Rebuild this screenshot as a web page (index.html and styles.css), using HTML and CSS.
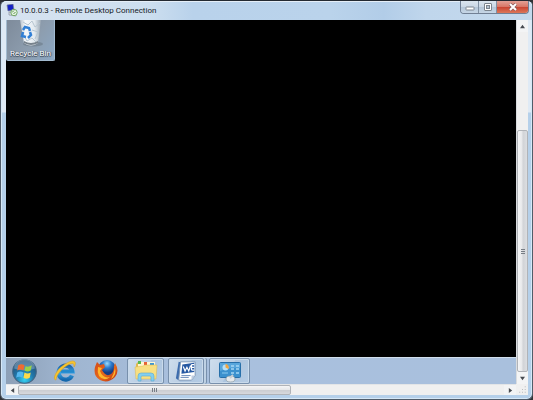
FILE: index.html
```html
<!DOCTYPE html>
<html lang="en">
<head>
<meta charset="utf-8">
<title>10.0.0.3 - Remote Desktop Connection</title>
<link rel="stylesheet" href="styles.css">
</head>
<body>
<main class="window">
  <header class="titlebar">
    <svg class="app-icon" viewBox="0 0 12 13" aria-hidden="true">
      <path d="M1 1l6-1 1 6-6 1z" fill="#1421c4" stroke="#777e94" stroke-width=".7"/>
      <path d="M3 8l7 1v3l-7-1z" fill="#d8dde5" stroke="#7d8795" stroke-width=".6"/>
      <circle cx="8" cy="8.500" r="3.200" fill="#e9f5e6" stroke="#72a863"/>
      <path d="M6 8.500l2-2M7.500 10l2-2" stroke="#579348" stroke-width="1"/>
    </svg>
    <h1 class="title">10.0.0.3 - Remote Desktop Connection</h1>
    <div class="controls">
      <button class="control" aria-label="Minimize"><svg viewBox="0 0 10 8"><rect x="1" y="4" width="8" height="3" rx=".5" fill="#fff" stroke="#7c858f"/></svg></button>
      <button class="control" aria-label="Maximize"><svg viewBox="0 0 10 8"><rect x="1.500" y=".5" width="7" height="7" rx=".5" fill="#fff" stroke="#7c858f"/><rect x="3.500" y="2.500" width="3" height="3" fill="#b3c2d1" stroke="#7c858f"/></svg></button>
      <button class="control close" aria-label="Close"><svg viewBox="0 0 10 8"><path d="M2 1l6 6M8 1L2 7" stroke="#8a5a5a" stroke-width="3.400"/><path d="M2 1l6 6M8 1L2 7" stroke="#fff" stroke-width="2"/></svg></button>
    </div>
  </header>
  <div class="viewport">
    <section class="remote">
      <div class="desktop">
        <div class="shortcut">
          <svg class="bin" viewBox="0 0 26 28" aria-hidden="true">
            <defs><linearGradient id="glass"><stop stop-color="#b7c1cb"/><stop offset=".25" stop-color="#f5f8fb"/><stop offset=".7" stop-color="#e2e9ef"/><stop offset="1" stop-color="#9aa7b3"/></linearGradient></defs>
            <ellipse cx="15" cy="24" rx="10" ry="2.500" fill="#64717e" opacity=".5"/>
            <path d="M2 0h21l-3 23q-7 5-14 0z" fill="url(#glass)"/>
            <path d="M5 2l5 3 4-4 3 6 5-4M14 10l6 2-3 7M5 14l4 7 5-3 4 4" fill="none" stroke="#b7c5d0"/>
            <path d="M6 21q7 4 14 0v2q-7 4-14 0z" fill="#77828c"/>
            <path d="M5 10l2-3 4 1 1 3M12 12l1 3-3 3M8 17l-4-1 1-4" fill="none" stroke="#317fd5" stroke-width="2.500"/>
          </svg>
          <span class="shortcut-name">Recycle Bin</span>
        </div>
      </div>
      <nav class="taskbar" aria-label="Taskbar">
        <button class="task start" aria-label="Start">
          <svg viewBox="0 0 24 24"><defs><radialGradient id="orb" cx=".5" cy=".85" r=".85"><stop stop-color="#36d2f3"/><stop offset=".45" stop-color="#2077aa"/><stop offset="1" stop-color="#29496c"/></radialGradient></defs><circle cx="12" cy="12" r="11.300" fill="url(#orb)" stroke="#426482"/><path d="M2 9a10 9 0 0 1 20 0q-10 4-20 0" fill="#a9c9dd" opacity=".4"/><path d="M6 6q3-2 6 0l-1 5q-3-2-6 0z" fill="#f06b30"/><path d="M13 7q3 1 6-1l-1 5q-3 2-6 0z" fill="#9bd246"/><path d="M5 13q3-2 6 0l-1 5q-3-2-6 0z" fill="#54b7ef"/><path d="M12 13q3 2 6 0l-1 5q-3 2-6 0z" fill="#ffda49"/></svg>
        </button>
        <button class="task" aria-label="Internet Explorer">
          <svg viewBox="0 0 24 24"><defs><linearGradient id="ie" x2="0" y2="1"><stop stop-color="#1d64ab"/><stop offset=".5" stop-color="#37a4e6"/><stop offset="1" stop-color="#1568ad"/></linearGradient></defs><path d="M19 16.500A7 7 0 1 1 19.500 12.500H7" fill="none" stroke="url(#ie)" stroke-width="4.200"/><path d="M8 12.500h13" stroke="#2389cc" stroke-width="2.500"/><path d="M3 21C-1 21 3 12 8 8s12-8 14-5c1 1 0 4-1 5 0-4-1-4-4-3C10 8 3 16 3 21z" fill="#f7c42e" stroke="#d29b24" stroke-width=".5"/></svg>
        </button>
        <button class="task" aria-label="Firefox">
          <svg viewBox="0 0 24 24"><defs><radialGradient id="globe" cx=".5" cy=".2"><stop stop-color="#9bdbfa"/><stop offset=".5" stop-color="#2b7acc"/><stop offset="1" stop-color="#193c83"/></radialGradient><linearGradient id="fox" x2="1" y2="1"><stop stop-color="#d54b16"/><stop offset=".55" stop-color="#e5681c"/><stop offset="1" stop-color="#b92c13"/></linearGradient></defs><circle cx="13" cy="10" r="9" fill="url(#globe)"/><path d="M3 3l3 3 4-1 1 3-3 3q3 6 7 5 5-1 5-9l1-3q5 8 0 14-7 7-15 3-7-4-5-13z" fill="url(#fox)"/><path d="M4 8l4 1-2 3q3 8 10 6-6 5-11-1-2-4-1-9zM21 9q2 7-4 11 3-5 4-11z" fill="#ffb62c"/></svg>
        </button>
        <button class="task running explorer" aria-label="Windows Explorer">
          <svg viewBox="0 0 24 24"><path d="M2 5l2-2h6l2 2h9v13H2z" fill="#e1b84e"/><path d="M4 3h17v8H4z" fill="#fff6d0"/><path d="M4 2h3v3H4z" fill="#57b94f"/><path d="M10 3h3v3h-3z" fill="#e76136"/><path d="M16 4h4v2h-4z" fill="#3c96d5"/><path d="M1 8l8-1 2-1h12l-1 14H2z" fill="#f7df82" stroke="#dab650" stroke-width=".5"/><path d="M4 22v-5q0-3 3-3h10q3 0 3 3v5h-3v-4q0-1-1-1H8q-1 0-1 1v4z" fill="#83cfef" stroke="#5ca9cf" stroke-width=".6"/></svg>
        </button>
        <button class="task running grouped word" aria-label="Microsoft Word">
          <svg viewBox="0 0 24 24"><path d="M4 2L1 20q1 2 4 2l3-19z" fill="#3c6cae"/><path d="M6 2h16v15l-4 5H4z" fill="#fff" stroke="#7893b4"/><path d="M8 5l13-2v10L7 15z" fill="#2658a2"/><path d="M9 7l2 5 2-4 2 4 2-6M18 5v6M18 5h3M18 8h3M18 11h3" stroke="#fff" stroke-width="1.300" fill="none"/><path d="M7 17h10M6 19h9" stroke="#5e82b7" stroke-width="1"/><path d="M18 22v-5h4z" fill="#bdcce0"/></svg>
        </button>
        <button class="task running panel" aria-label="Control Panel">
          <svg viewBox="0 0 24 24"><rect x="1.500" y="3.500" width="21" height="15" rx="1" fill="#3c91ce" stroke="#276fa9"/><path d="M2 4h20v5q-10-1-20 3z" fill="#73bcea" opacity=".5"/><circle cx="7.500" cy="8.500" r="3" fill="#b6e0f6"/><path d="M7.500 8.500V5a3.500 3.500 0 0 1 3 5z" fill="#f5a43b"/><path d="M13 7h3M18 7h3M13 10h3M18 10h3M13 14h3M18 14h3" stroke="#a5d6f3" stroke-width="1.300"/><path d="M4 14h6" stroke="#8acbf0"/><ellipse cx="12.500" cy="20" rx="4.500" ry="3" fill="#e5e9ec" stroke="#8a989f" stroke-width=".7"/><path d="M12 19l3-3" stroke="#c8ced2" stroke-width="2"/></svg>
        </button>
      </nav>
    </section>
    <div class="scroll vertical">
      <button class="arrow" aria-label="Scroll up"><svg viewBox="0 0 6 6"><path d="M0 5l3-4 3 4z"/></svg></button>
      <div class="track"><div class="space"></div><div class="thumb"><i></i><i></i><i></i></div></div>
      <button class="arrow" aria-label="Scroll down"><svg viewBox="0 0 6 6"><path d="M0 1l3 4 3-4z"/></svg></button>
    </div>
    <div class="scroll horizontal">
      <button class="arrow" aria-label="Scroll left"><svg viewBox="0 0 6 6"><path d="M5 0L1 3l4 3z"/></svg></button>
      <div class="track"><div class="thumb"><i></i><i></i><i></i></div><div class="space"></div></div>
      <button class="arrow" aria-label="Scroll right"><svg viewBox="0 0 6 6"><path d="M1 0l4 3-4 3z"/></svg></button>
    </div>
    <svg class="grip" viewBox="0 0 12 12" aria-hidden="true"><path d="M9 3h1M6 6h1M9 6h1M3 9h1M6 9h1M9 9h1" stroke="#aeb1b5" stroke-width="1"/></svg>
  </div>
</main>
</body>
</html>
```
FILE: styles.css
```css
* { box-sizing: border-box; }
html { background: #303236; }
body { margin: 0; font-family: Roboto, "Liberation Sans", sans-serif; }
button { margin: 0; padding: 0; border: 0; background: none; font: inherit; }
svg { display: block; }

.window {
  display: flex;
  flex-direction: column;
  height: 100vh;
  padding: 0 4px 4px 5px;
  border: 1px solid #515c69;
  border-top-color: #242a32;
  border-radius: 6px;
  background: linear-gradient(#dfeaf5 0, #dfeaf5 111px, #b5d0ea 112px, #b5d0ea 100%);
  box-shadow: inset 0 0 0 1px #d6e8f7;
}

.titlebar {
  display: flex;
  flex: none;
  align-items: center;
  height: 19px;
  margin: 0 -4px;
  padding-left: 4px;
  border-radius: 5px 5px 0 0;
  background: linear-gradient(90deg, #d7e3f0 0, #ccdeef 28%, #b9d2eb 36%, #bad3eb 62%, #b2cde8 72%, #c0d6ec 80%, #c4d9ed 100%);
  box-shadow: inset 0 1px #e5eef7;
}
.app-icon { width: 12px; height: 13px; }
.title { flex: 1; margin: 0 0 0 2px; color: #15191e; font-size: 8px; line-height: 12px; font-weight: 400; white-space: nowrap; }
.controls {
  display: flex;
  align-self: flex-start;
  height: 13px;
  margin-right: 3px;
  border: 1px solid #718095;
  border-top: 0;
  border-radius: 0 0 4px 4px;
  overflow: hidden;
}
.control {
  display: grid;
  place-items: center;
  width: 18px;
  border-right: 1px solid #8090a3;
  background: linear-gradient(#dbe5ef 0, #cbd8e6 48%, #b4c6d8 50%, #c6d6e6 100%);
}
.control svg { width: 10px; height: 8px; }
.close { width: 31px; border-right: 0; background: linear-gradient(#e3a196 0, #d97868 46%, #c94331 50%, #dc7759 100%); }

.viewport {
  display: grid;
  flex: 1;
  grid-template-columns: minmax(0, 1fr) 12px;
  grid-template-rows: minmax(0, 1fr) 11px;
  min-height: 0;
  background: #f0f0f0;
}
.remote { display: flex; flex-direction: column; min-width: 0; background: #000; }
.desktop { flex: 1; }
.shortcut {
  display: flex;
  flex-direction: column;
  align-items: center;
  width: 49px;
  height: 41px;
  border: 1px solid #a3bbd0;
  border-top: 0;
  border-radius: 0 0 2px 2px;
  background: linear-gradient(125deg, #7e8b9b, #8d9dae 55%, #8da9c5);
}
.bin { width: 26px; height: 28px; }
.shortcut-name { color: #fff; font-size: 8px; line-height: 12px; text-shadow: 0 1px 1px #273544, 1px 0 1px #39495a; white-space: nowrap; }

.taskbar {
  display: flex;
  gap: 1px;
  height: 27px;
  border-top: 1px solid #d1dfec;
  background: linear-gradient(90deg, #8da0b7 0, #9fb5d0 12%, #a9c0de 35%, #a9c0dd 100%);
}
.task { display: grid; place-items: center; width: 40px; }
.task svg { width: 24px; height: 24px; }
.start { width: 36px; }
.task.start svg { width: 25px; height: 25px; }
.start + .task { margin-left: 2px; }
.running {
  border: 1px solid #7890ac;
  border-radius: 2px;
  background: linear-gradient(120deg, #cfdeed 0, #bccfe4 48%, #acc4de 50%, #b6cce4 100%);
  box-shadow: inset 0 0 0 1px #c9daeb;
}
.running.explorer { width: 37px; }
.running.word { width: 36px; margin-left: 3px; }
.running.panel { width: 41px; margin-left: 4px; }
.task.word svg { width: 22px; height: 22px; }
.grouped { box-shadow: inset 0 0 0 1px #c9daeb, 2px 0 #bed1e4, 3px 0 #7890ac; }

.scroll { display: flex; background: #f0f0f0; }
.vertical { flex-direction: column; border-left: 1px solid #d9dcdf; }
.horizontal { border-top: 1px solid #e3e5e7; }
.arrow { display: grid; flex: 0 0 12px; place-items: center; background: #f3f4f5; }
.arrow svg { width: 5px; height: 5px; fill: #464a50; }
.track { display: flex; flex: 1; min-width: 0; min-height: 0; }
.vertical .track { flex-direction: column; }
.thumb { display: flex; align-items: center; justify-content: center; border: 1px solid #b0b3b8; border-radius: 2px; }
.thumb i { background: #777d85; }
.vertical .space { flex: 29; }
.vertical .thumb { flex: 71; flex-direction: column; gap: 1px; background: linear-gradient(90deg, #f5f5f6, #e6e7e9 48%, #d0d2d6 52%, #dcdee1); }
.vertical .thumb i { width: 4px; height: 1px; }
.horizontal .thumb { flex: 56; gap: 1px; background: linear-gradient(#f5f5f6, #e6e7e9 48%, #cbcdd1 52%, #d7d9dd); }
.horizontal .thumb i { width: 1px; height: 4px; }
.horizontal .space { flex: 44; }
.grip { width: 12px; height: 11px; }
```
